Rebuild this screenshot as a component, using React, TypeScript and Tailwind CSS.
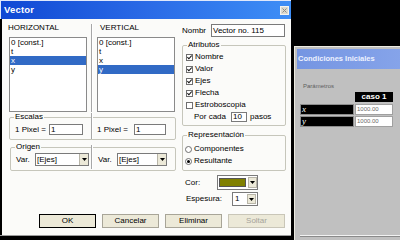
import React from "react";

function ListBox({ items, selected }: { items: string[]; selected: number }) {
  return (
    <div className="mt-[4px] w-[78px] h-[75px] bg-white border border-[#8a8a8a] flex flex-col">
      {items.map((it, i) => (
        <div
          key={i}
          className={
            i === selected
              ? "h-[9px] leading-[9px] text-[8px] pl-[1px] bg-[#316ac5] text-white"
              : "h-[9px] leading-[9px] text-[8px] pl-[1px] text-black"
          }
        >
          {it}
        </div>
      ))}
    </div>
  );
}

function Arrow() {
  return (
    <div className="w-[9px] self-stretch bg-[#ece9d8] border-l border-[#b8b5a8] flex items-center justify-center">
      <svg width="5" height="3" viewBox="0 0 5 3">
        <path d="M0 0 L5 0 L2.5 3 Z" fill="#000" />
      </svg>
    </div>
  );
}

function Check({ checked }: { checked: boolean }) {
  return (
    <span className="w-[7px] h-[7px] bg-white border border-[#6f6f6f] flex items-center justify-center shrink-0">
      {checked && (
        <svg width="5" height="5" viewBox="0 0 5 5">
          <path d="M0.4 2.2 L1.9 3.8 L4.7 0.6" stroke="#111" strokeWidth="1.1" fill="none" />
        </svg>
      )}
    </span>
  );
}

function Radio({ on }: { on: boolean }) {
  return (
    <span className="w-[7px] h-[7px] rounded-full bg-white border border-[#6f6f6f] flex items-center justify-center shrink-0">
      {on && <span className="w-[3px] h-[3px] rounded-full bg-black" />}
    </span>
  );
}

function Btn({ label, def, disabled }: { label: string; def?: boolean; disabled?: boolean }) {
  return (
    <div
      className={
        def
          ? "w-[57px] h-[14px] border border-black bg-[#ece9d8] flex items-center justify-center text-[8px] text-black"
          : disabled
          ? "w-[57px] h-[14px] border border-[#c9c6b8] bg-[#ece9d8] flex items-center justify-center text-[8px] text-[#a5a39a]"
          : "w-[57px] h-[14px] border border-[#a8a598] bg-[#ece9d8] flex items-center justify-center text-[8px] text-black"
      }
    >
      {label}
    </div>
  );
}

export default function App() {
  return (
    <div className="relative w-[400px] h-[240px] bg-black overflow-hidden font-['Liberation_Sans',Arial,sans-serif] text-black">
      {/* Vector dialog */}
      <div className="absolute left-0 top-0 w-[291px] h-[236px] flex flex-col bg-[#fbfbf9] border-b border-[#9c9c9c]">
        <div className="h-[19px] border-t border-l border-[#dfe8fb] bg-gradient-to-r from-[#1048d4] via-[#2a6ae6] to-[#3e8ef6] flex items-center pl-[3px] pr-[2px]">
          <span className="text-white font-bold text-[9.5px] tracking-[0.2px]">Vector</span>
          <span className="ml-auto w-[9px] h-[9px] bg-[#dcdad0] border border-[#f4f3ee] flex items-center justify-center">
            <svg width="5" height="5" viewBox="0 0 5 5">
              <path d="M0.5 0.5 L4.5 4.5 M4.5 0.5 L0.5 4.5" stroke="#8d8b84" strokeWidth="1" />
            </svg>
          </span>
        </div>
        <div className="flex-1 flex flex-col border-l-2 border-black pl-[6px] pt-[4px]">
          <div className="flex">
            {/* Left column */}
            <div className="w-[168px] flex flex-col">
              <div className="flex h-[89px]">
                <div className="w-[80px] flex flex-col">
                  <div className="h-[10px] leading-[10px] text-[8px]">HORIZONTAL</div>
                  <div className="pl-[1px]">
                    <ListBox items={["0 [const.]", "t", "x", "y"]} selected={2} />
                  </div>
                </div>
                <div className="w-[9px] flex pl-[3px] pt-[1px]">
                  <div className="w-[2px] h-full border-l border-[#a7a7a7] border-r border-r-white" />
                </div>
                <div className="w-[79px] flex flex-col">
                  <div className="h-[10px] leading-[10px] text-[8px] pl-[3px]">VERTICAL</div>
                  <ListBox items={["0 [const.]", "t", "x", "y"]} selected={3} />
                </div>
              </div>

              {/* Escalas */}
              <fieldset className="mt-[1px] ml-[1px] w-[167px] border border-[#c6c6bb] rounded-[2px] pb-[4px]">
                <legend className="ml-[4px] px-[1px] text-[8px] leading-[8px]">Escalas</legend>
                <div className="flex items-center h-[11px] mt-[3px]">
                  <div className="w-[81px] flex items-center pl-[5px]">
                    <span className="text-[8px] w-[34px]">1 Pixel =</span>
                    <div className="w-[34px] h-[11px] bg-white border border-[#7a7a7a] text-[8px] leading-[9px] pl-[1px]">1</div>
                  </div>
                  <div className="w-[2px] h-[26px] -mt-[8px] border-l border-[#a7a7a7] border-r border-r-white" />
                  <div className="flex items-center pl-[4px]">
                    <span className="text-[8px] w-[37px]">1 Pixel =</span>
                    <div className="w-[32px] h-[11px] bg-white border border-[#7a7a7a] text-[8px] leading-[9px] pl-[1px]">1</div>
                  </div>
                </div>
              </fieldset>

              {/* Origen */}
              <fieldset className="mt-[3px] ml-[2px] w-[166px] border border-[#c6c6bb] rounded-[2px] pb-[4px]">
                <legend className="ml-[4px] px-[1px] text-[8px] leading-[8px]">Origen</legend>
                <div className="flex items-center h-[13px] mt-[2px]">
                  <div className="w-[80px] flex items-center pl-[5px]">
                    <span className="text-[8px] w-[19px]">Var.</span>
                    <div className="w-[54px] h-[13px] bg-white border border-[#7a7a7a] flex items-center">
                      <span className="flex-1 text-[8px] pl-[1px] leading-[11px]">[Ejes]</span>
                      <Arrow />
                    </div>
                  </div>
                  <div className="w-[2px] h-[24px] -mt-[6px] border-l border-[#a7a7a7] border-r border-r-white" />
                  <div className="flex items-center pl-[5px]">
                    <span className="text-[8px] w-[19px]">Var.</span>
                    <div className="w-[50px] h-[13px] bg-white border border-[#7a7a7a] flex items-center">
                      <span className="flex-1 text-[8px] pl-[1px] leading-[11px]">[Ejes]</span>
                      <Arrow />
                    </div>
                  </div>
                </div>
              </fieldset>
            </div>

            {/* Right column */}
            <div className="ml-[6px] w-[104px] flex flex-col">
              <div className="flex items-center mt-[1px] h-[13px]">
                <span className="text-[8px] w-[29px] overflow-hidden whitespace-nowrap">Nombr</span>
                <div className="w-[74px] h-[13px] bg-white border border-[#7a7a7a] text-[8px] leading-[11px] pl-[1px]">Vector no. 115</div>
              </div>

              <fieldset className="mt-[4px] w-[104px] border border-[#c6c6bb] rounded-[2px] pb-[2px] pl-[3px]">
                <legend className="ml-[1px] px-[1px] text-[8px] leading-[8px]">Atributos</legend>
                <div className="flex flex-col pt-[2px]">
                  {[
                    ["Nombre", true],
                    ["Valor", true],
                    ["Ejes", true],
                    ["Flecha", true],
                    ["Estroboscopia", false],
                  ].map(([l, c]) => (
                    <div key={l as string} className="h-[12px] flex items-center gap-[2px]">
                      <Check checked={c as boolean} />
                      <span className="text-[8px]">{l as string}</span>
                    </div>
                  ))}
                  <div className="h-[12px] flex items-center pl-[8px]">
                    <span className="text-[8px] w-[37px]">Por cada</span>
                    <div className="w-[16px] h-[10px] bg-white border border-[#7a7a7a] text-[8px] leading-[8px] pl-[1px]">10</div>
                    <span className="text-[8px] ml-[3px]">pasos</span>
                  </div>
                </div>
              </fieldset>

              <fieldset className="mt-[5px] w-[104px] border border-[#c6c6bb] rounded-[2px] pb-[3px] pl-[2px]">
                <legend className="ml-[2px] px-[1px] text-[8px] leading-[8px]">Representación</legend>
                <div className="flex flex-col pt-[4px]">
                  <div className="h-[12px] flex items-center gap-[2px]">
                    <Radio on={false} />
                    <span className="text-[8px]">Componentes</span>
                  </div>
                  <div className="h-[12px] flex items-center gap-[2px]">
                    <Radio on={true} />
                    <span className="text-[8px]">Resultante</span>
                  </div>
                </div>
              </fieldset>

              <div className="mt-[4px] h-[15px] flex items-center">
                <span className="w-[35px] pl-[3px] text-[8px]">Cor:</span>
                <div className="w-[41px] h-[15px] bg-white border border-[#7a7a7a] flex items-center pl-[1px] gap-[2px] py-[1px]">
                  <div className="w-[27px] h-[9px] bg-[#808000] border border-[#555]" />
                  <div className="ml-auto mr-[0px] h-[11px] w-[9px] bg-[#ece9d8] border border-[#b8b5a8] flex items-center justify-center">
                    <svg width="5" height="3" viewBox="0 0 5 3">
                      <path d="M0 0 L5 0 L2.5 3 Z" fill="#000" />
                    </svg>
                  </div>
                </div>
              </div>

              <div className="mt-[2px] h-[14px] flex items-center">
                <span className="w-[50px] pl-[4px] text-[8px]">Espesura:</span>
                <div className="w-[26px] h-[14px] bg-white border border-[#7a7a7a] flex items-center pl-[2px] py-[1px]">
                  <span className="flex-1 text-[8px] leading-[10px]">1</span>
                  <div className="h-[10px] w-[9px] bg-[#ece9d8] border border-[#b8b5a8] flex items-center justify-center mr-[1px]">
                    <svg width="5" height="3" viewBox="0 0 5 3">
                      <path d="M0 0 L5 0 L2.5 3 Z" fill="#000" />
                    </svg>
                  </div>
                </div>
              </div>
            </div>
          </div>

          <div className="mt-[8px] flex gap-[6px] pl-[31px]">
            <Btn label="OK" def />
            <Btn label="Cancelar" />
            <Btn label="Eliminar" />
            <Btn label="Soltar" disabled />
          </div>
        </div>
      </div>

      {/* Condiciones Iniciales window */}
      <div className="absolute left-[294px] top-[46px] w-[110px] h-[194px] flex flex-col bg-[#c0c0c0] border-l border-t border-[#ecebe2]">
        <div className="mt-[2px] ml-[2px] h-[20px] bg-gradient-to-r from-[#7595e2] to-[#86a4ea] flex items-center pl-[1px]">
          <span className="text-[#eef2ff] font-bold text-[7.5px] whitespace-nowrap">Condiciones Iniciales</span>
        </div>
        <div className="flex-1 flex flex-col pl-[5px]">
          <div className="mt-[13px] pl-[3px] text-[6px] leading-[8px] text-[#5e5e5e]">Parámetros</div>
          <div className="mt-[2px] flex flex-col gap-[1px]">
            <div className="flex gap-[1px] mb-[1px]">
              <div className="w-[54px]" />
              <div className="w-[38px] h-[10px] bg-black text-white font-bold text-[8px] leading-[10px] text-center">caso 1</div>
            </div>
            {["x", "y"].map((v) => (
              <div key={v} className="flex gap-[1px]">
                <div className="w-[54px] h-[11px] bg-black border border-[#8c8c8c] text-white italic text-[9px] leading-[9px] pl-[1px] font-['Liberation_Serif',serif]">
                  {v}
                </div>
                <div className="w-[38px] h-[11px] bg-white border border-[#a0a0a0] text-[6px] leading-[9px] text-[#6a6a6a] pl-[1px]">1000.00</div>
              </div>
            ))}
          </div>
          <div className="mt-auto mb-[3px] h-[2px] border-t border-[#f2f2f2] border-b border-b-[#8a8a8a]" />
        </div>
      </div>
    </div>
  );
}
